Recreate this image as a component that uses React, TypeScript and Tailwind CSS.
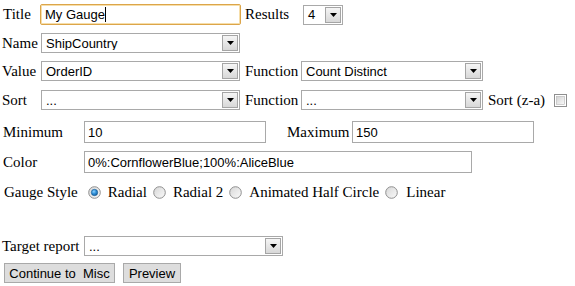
import React from "react";

const serif = "font-['Liberation_Serif',serif] text-[15px] text-black leading-none whitespace-nowrap";
const sans = "font-['Liberation_Sans',Arial,sans-serif] text-[13px] text-black leading-none whitespace-nowrap";

function Select({ w, text }: { w: string; text: string }) {
  return (
    <div className={`${w} h-[20px] border border-[#a9a9a9] bg-white flex items-center shrink-0`}>
      <div className={`${sans} flex-1 pl-[4px] overflow-hidden`}>{text}</div>
      <div className="h-[16px] w-[16px] mr-[1px] border border-[#a5a5a5] bg-linear-to-b from-[#f5f5f5] to-[#d8d8d8] flex items-center justify-center">
        <svg width="7" height="4" viewBox="0 0 7 4">
          <path d="M0 0H7L3.5 4Z" fill="#000" />
        </svg>
      </div>
    </div>
  );
}

function TextBox({ w, text }: { w: string; text: string }) {
  return (
    <div className={`${w} h-[22px] border border-[#a9a9a9] bg-white flex items-center shrink-0`}>
      <div className={`${sans} pl-[3px]`}>{text}</div>
    </div>
  );
}

function Radio({ checked }: { checked?: boolean }) {
  return (
    <svg width="13" height="13" viewBox="0 0 13 13" className="shrink-0">
      <defs>
        <linearGradient id="rg" x1="0" y1="0" x2="1" y2="1">
          <stop offset="0" stopColor="#d6d6d6" />
          <stop offset="1" stopColor="#fbfbfb" />
        </linearGradient>
        <radialGradient id="rb" cx="0.4" cy="0.35" r="0.7">
          <stop offset="0" stopColor="#8fd3ff" />
          <stop offset="0.5" stopColor="#2f8fd8" />
          <stop offset="1" stopColor="#115c9c" />
        </radialGradient>
      </defs>
      <circle cx="6.5" cy="6.5" r="5.8" fill="url(#rg)" stroke="#8f8f8f" strokeWidth="1" />
      {checked && <circle cx="6.5" cy="6.5" r="3.2" fill="url(#rb)" stroke="#175a92" strokeWidth="0.6" />}
    </svg>
  );
}

function Checkbox() {
  return (
    <svg width="13" height="13" viewBox="0 0 13 13" className="shrink-0">
      <defs>
        <linearGradient id="cg" x1="0" y1="0" x2="1" y2="1">
          <stop offset="0" stopColor="#d2d2d2" />
          <stop offset="1" stopColor="#fafafa" />
        </linearGradient>
      </defs>
      <rect x="0.5" y="0.5" width="12" height="12" fill="#fff" stroke="#8f8f8f" />
      <rect x="2.5" y="2.5" width="8" height="8" fill="url(#cg)" stroke="#b5b5b5" strokeWidth="0.6" />
    </svg>
  );
}

function Button({ w, children }: { w: string; children: React.ReactNode }) {
  return (
    <div className={`${w} h-[20px] border border-[#a9a9a9] bg-[#dddddd] flex items-center justify-center ${sans} whitespace-pre`}>
      {children}
    </div>
  );
}

export default function App() {
  return (
    <div className="w-[575px] h-[286px] bg-white flex flex-col overflow-hidden">
      {/* Title row */}
      <div className="mt-[4px] h-[21px] flex items-center">
        <div className={`${serif} w-[40px] pl-[3px]`}>Title</div>
        <div className="w-[201px] h-[21px] rounded-[2px] border border-[#dca54a] shadow-[inset_0_0_0_1px_#f6deaa] bg-white flex items-center shrink-0">
          <div className={`${sans} pl-[4px]`}>My Gauge</div>
          <div className="w-[1px] h-[15px] bg-black" />
        </div>
        <div className={`${serif} ml-[4px] w-[58px]`}>Results</div>
        <Select w="w-[40px]" text="4" />
      </div>

      {/* Name row */}
      <div className="mt-[8px] h-[20px] flex items-center">
        <div className={`${serif} w-[41px] pl-[2px]`}>Name</div>
        <Select w="w-[199px]" text="ShipCountry" />
      </div>

      {/* Value row */}
      <div className="mt-[8px] h-[20px] flex items-center">
        <div className={`${serif} w-[41px] pl-[2px]`}>Value</div>
        <Select w="w-[199px]" text="OrderID" />
        <div className={`${serif} w-[61px] pl-[5px]`}>Function</div>
        <Select w="w-[182px]" text="Count Distinct" />
      </div>

      {/* Sort row */}
      <div className="mt-[9px] h-[20px] flex items-center">
        <div className={`${serif} w-[41px] pl-[2px]`}>Sort</div>
        <Select w="w-[199px]" text="..." />
        <div className={`${serif} w-[61px] pl-[5px]`}>Function</div>
        <Select w="w-[182px]" text="..." />
        <div className={`${serif} w-[71px] pl-[5px]`}>Sort (z-a)</div>
        <Checkbox />
      </div>

      {/* Minimum / Maximum */}
      <div className="mt-[11px] h-[22px] flex items-center">
        <div className={`${serif} w-[84px] pl-[3px]`}>Minimum</div>
        <TextBox w="w-[182px]" text="10" />
        <div className={`${serif} w-[86px] pl-[21px]`}>Maximum</div>
        <TextBox w="w-[182px]" text="150" />
      </div>

      {/* Color */}
      <div className="mt-[8px] h-[22px] flex items-center">
        <div className={`${serif} w-[84px] pl-[3px]`}>Color</div>
        <TextBox w="w-[388px]" text="0%:CornflowerBlue;100%:AliceBlue" />
      </div>

      {/* Gauge style */}
      <div className="mt-[9px] h-[20px] flex items-center pl-[4px]">
        <div className={`${serif} mr-[10px]`}>Gauge Style</div>
        <Radio checked />
        <div className={`${serif} ml-[7px] mr-[6px]`}>Radial</div>
        <Radio />
        <div className={`${serif} ml-[7px] mr-[6px]`}>Radial 2</div>
        <Radio />
        <div className={`${serif} ml-[7px] mr-[6px]`}>Animated Half Circle</div>
        <Radio />
        <div className={`${serif} ml-[8px]`}>Linear</div>
      </div>

      {/* Target report */}
      <div className="mt-[34px] h-[20px] flex items-center">
        <div className={`${serif} w-[84px] pl-[2px]`}>Target report</div>
        <Select w="w-[199px]" text="..." />
      </div>

      {/* Buttons */}
      <div className="mt-[7px] h-[20px] flex items-center pl-[4px] gap-[8px]">
        <Button w="w-[111px]">Continue to  Misc</Button>
        <Button w="w-[58px]">Preview</Button>
      </div>
    </div>
  );
}
